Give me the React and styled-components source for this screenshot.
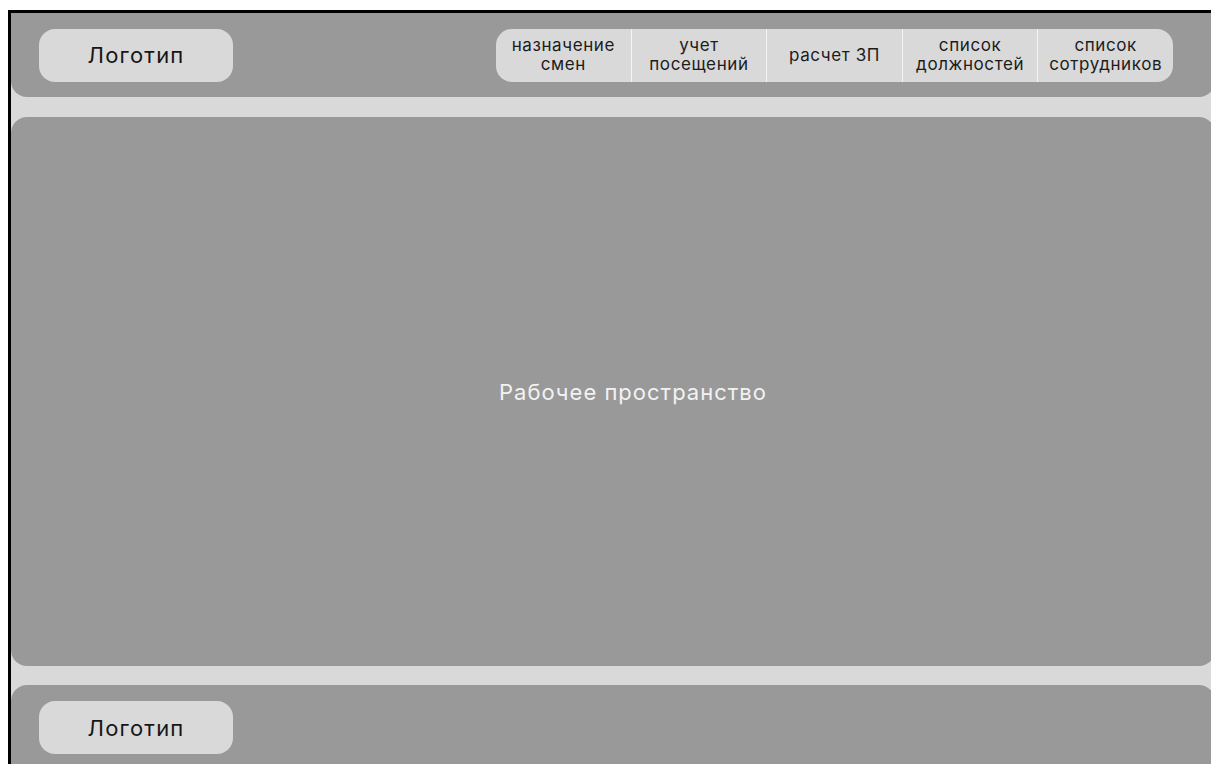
import React from "react";
import styled, { createGlobalStyle } from "styled-components";

const GlobalStyle = createGlobalStyle`
  html, body {
    margin: 0;
    padding: 0;
    background: #ffffff;
    overflow: hidden;
  }
  body {
    font-family: "Inter", "Liberation Sans", sans-serif;
  }
`;

const Frame = styled.div`
  margin: 10px 0 0 8px;
  width: 1204px;
  height: 760px;
  border-left: 3px solid #000;
  border-top: 3px solid #000;
  background: #d9d9d9;
  display: flex;
  flex-direction: column;
`;

const Bar = styled.header`
  flex: none;
  height: ${(p) => p.$height}px;
  margin-top: ${(p) => p.$offset || 0}px;
  background: #999999;
  border-radius: ${(p) => (p.$top ? "0 0 16px 16px" : "16px")};
  display: flex;
  align-items: ${(p) => (p.$top ? "center" : "flex-start")};
  justify-content: space-between;
  padding: ${(p) => (p.$top ? "0 42px 0 28px" : "16px 28px")};
  box-sizing: border-box;
`;

const Logo = styled.div`
  width: 194px;
  height: 53px;
  border-radius: 16px;
  background: #d9d9d9;
  display: flex;
  align-items: center;
  justify-content: center;
  font-size: 22px;
  letter-spacing: 1.2px;
  color: #161616;
`;

const Nav = styled.nav`
  display: flex;
  height: 53px;
  border-radius: 16px;
  overflow: hidden;
  background: #d9d9d9;
`;

const NavItem = styled.div`
  width: 134.6px;
  display: flex;
  align-items: center;
  justify-content: center;
  text-align: center;
  font-size: 17px;
  line-height: 19px;
  letter-spacing: 0.6px;
  color: #1c1c1c;
  & + & {
    border-left: 1px solid #f4f4f4;
  }
`;

const Workspace = styled.main`
  flex: none;
  height: 549px;
  margin-top: 20px;
  background: #999999;
  border-radius: 16px;
  display: flex;
  align-items: center;
  justify-content: center;
  padding-left: 40px;
  box-sizing: border-box;
  font-size: 22px;
  letter-spacing: 1px;
  color: #f2f2f2;
`;

const navItems = [
  ["назначение", "смен"],
  ["учет", "посещений"],
  ["расчет ЗП"],
  ["список", "должностей"],
  ["список", "сотрудников"],
];

export default function App() {
  return (
    <>
      <GlobalStyle />
      <Frame>
        <Bar $top $height={84}>
          <Logo>Логотип</Logo>
          <Nav>
            {navItems.map((lines) => (
              <NavItem key={lines.join(" ")}>
                <span>
                  {lines.map((line, i) => (
                    <React.Fragment key={line}>
                      {i > 0 && <br />}
                      {line}
                    </React.Fragment>
                  ))}
                </span>
              </NavItem>
            ))}
          </Nav>
        </Bar>
        <Workspace>Рабочее пространство</Workspace>
        <Bar $height={100} $offset={19}>
          <Logo>Логотип</Logo>
        </Bar>
      </Frame>
    </>
  );
}
